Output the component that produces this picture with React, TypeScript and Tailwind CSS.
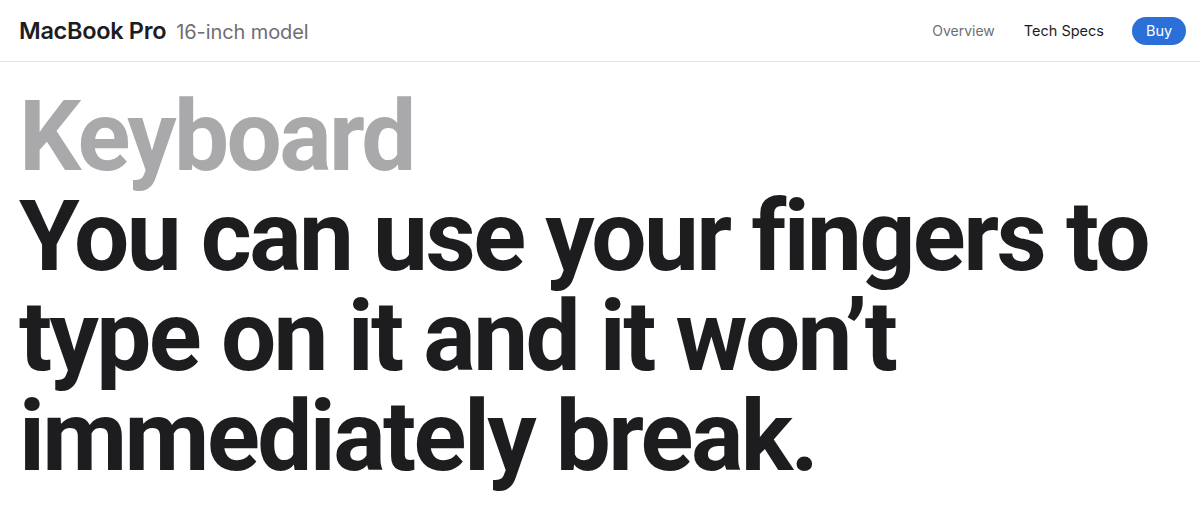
import React from 'react';

const App: React.FC = () => {
  return (
    <div className="min-h-screen bg-white text-[#1d1d1f]" style={{ fontFamily: 'Inter, "Liberation Sans", sans-serif' }}>
      <header className="h-[62px] border-b border-[#e3e3e3] flex items-center justify-between pl-[19px] pr-[14px]">
        <div className="flex items-baseline gap-[10px] pt-[1px]">
          <span className="text-[23.5px] font-semibold tracking-[-0.3px]">MacBook Pro</span>
          <span className="text-[20px] text-[#6e6e73] tracking-[-0.1px]">16-inch model</span>
        </div>
        <nav className="flex items-center">
          <a className="text-[14px] text-[#6e6e73] mr-[29px]">Overview</a>
          <a className="text-[14.5px] text-[#1d1d1f] mr-[28px]">Tech Specs</a>
          <button className="h-[28px] w-[54px] rounded-full bg-[#2b70d9] text-white text-[14.5px]">Buy</button>
        </nav>
      </header>
      <main className="pl-[19px] pt-[25px]">
        <h1 className="text-[98px] leading-[100px] font-bold tracking-[-2.6px]" style={{ fontFamily: 'Roboto, "Liberation Sans", sans-serif' }}>
          <span className="block text-[#a9a9ab]">Keyboard</span>
          <span className="block whitespace-nowrap">You can use your fingers to<br />type on it and it won’t<br />immediately break.</span>
        </h1>
      </main>
    </div>
  );
};

export default App;
